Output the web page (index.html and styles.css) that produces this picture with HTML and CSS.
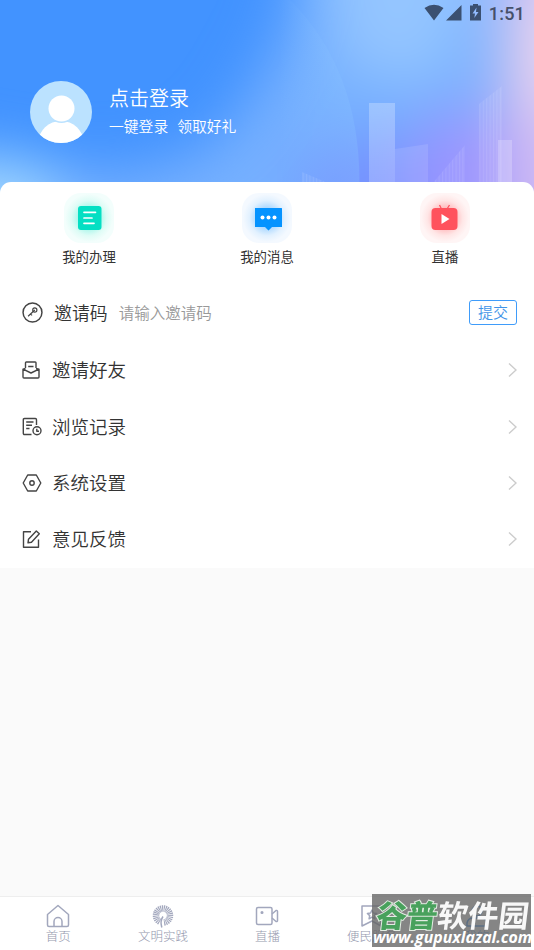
FILE: index.html
```html
<!DOCTYPE html>
<html lang="zh-CN">
<head>
<meta charset="utf-8">
<title>我的</title>
<link rel="stylesheet" href="styles.css">
</head>
<body>
<div class="screen">
  <header class="hero">
    <svg class="scene" viewBox="0 0 534 200" preserveAspectRatio="none" aria-hidden="true">
      <defs>
        <filter id="soft" x="-50%" y="-50%" width="200%" height="200%" color-interpolation-filters="sRGB"><feGaussianBlur stdDeviation="29"/></filter>
        <linearGradient id="arc" x1="0" y1="0" x2="1" y2="0"><stop offset=".55" stop-color="#8ac4ff" stop-opacity="0"/><stop offset="1" stop-color="#8ac4ff" stop-opacity=".3"/></linearGradient>
        <linearGradient id="tower" x1="0" y1="0" x2="0" y2="1"><stop offset="0" stop-color="#fff" stop-opacity=".26"/><stop offset="1" stop-color="#fff" stop-opacity=".2"/></linearGradient>
        <linearGradient id="fade" x1="0" y1="0" x2="0" y2="1"><stop offset="0" stop-color="#fff" stop-opacity=".5"/><stop offset="1" stop-color="#fff"/></linearGradient>
        <pattern id="lines" width="3.4" height="10" patternUnits="userSpaceOnUse"><rect width="1" height="10" fill="#fff" opacity=".14"/><rect x="1" width="2.4" height="10" fill="#fff" opacity=".05"/></pattern>
      </defs>
      <rect width="534" height="200" fill="#4293ff"/>
      <g filter="url(#soft)">
        <path d="M-80 140C10 168 90 182 160 165S245 105 285 30L310-80H700V300H-80Z" fill="#76b0ff"/>
        <ellipse cx="-5" cy="200" rx="70" ry="42" fill="#a4d8ff"/>
        <path d="M310-80L345 70L440 85L500-80Z" fill="#94c5ff"/>
        <ellipse cx="375" cy="195" rx="75" ry="55" fill="#7491ff"/>
        <ellipse cx="460" cy="175" rx="55" ry="65" fill="#9a94ff"/>
        <path d="M508-80L500 70L505 280H660V-80Z" fill="#d0bbf3"/>
        <ellipse cx="556" cy="45" rx="42" ry="80" fill="#ead4ee"/>
      </g>
      <path d="M180 0H290Q365 75 359 200H180Z" fill="url(#arc)"/>
      <path d="M369 103H395V200H369Z" fill="url(#tower)"/>
      <path d="M395 149L428 144V200H395Z" fill="#fff" opacity=".11"/>
      <path d="M302 172L330 184V200H302Z" fill="url(#lines)"/>
      <path d="M432 184L465 145V200H432Z" fill="url(#lines)"/>
      <path d="M479 104L502 86V200H479Z" fill="url(#lines)"/>
      <path d="M498 140H512V200H498Z" fill="#fff" opacity=".22"/>
    </svg>
    <div class="status">
      <svg class="status-icons" viewBox="0 0 60 18" width="60" height="18">
        <path d="M.5 4Q10-2.5 19.500 4L10 16.500Z M37.500 1V16.500H22Z"/>
        <path fill-rule="evenodd" d="M49 0h5v1.500h3v15H46v-15h3z M52.500 3.500L48.500 9.500H51L50.300 14L54.500 8H52Z"/>
      </svg>
      <span class="clock">1:51</span>
    </div>
    <div class="profile">
      <svg class="avatar" viewBox="0 0 62 62" width="62" height="62">
        <defs><clipPath id="face"><circle cx="31" cy="31" r="31"/></clipPath></defs>
        <g clip-path="url(#face)"><path fill="#bbe2ff" d="M0 0H62V62H0Z"/><ellipse cx="31" cy="61" rx="22.500" ry="21" fill="#fff"/><circle cx="31.500" cy="28" r="14" fill="#bbe2ff"/><circle cx="31.500" cy="27.500" r="13" fill="#fff"/></g>
      </svg>
      <div>
        <div class="login">点击登录</div>
        <div class="login-sub"><span>一键登录</span><span>领取好礼</span></div>
      </div>
    </div>
  </header>

  <main class="panel">
    <nav class="shortcuts">
      <a class="shortcut">
        <svg class="tile tile-green" viewBox="0 0 50 50"><rect x="14" y="13" width="23.500" height="24" rx="3" fill="#04dfc3"/><path d="M20 19.300H31.500M20 25H28M20 30.300H30" fill="none" stroke="#fff" stroke-width="1.700" stroke-linecap="round"/></svg>
        <span>我的办理</span>
      </a>
      <a class="shortcut">
        <svg class="tile tile-blue" viewBox="0 0 50 50"><path d="M13 15H39.500Q40 15 40 15.500V34H30L26.500 37.500L23 34H13.500Q13 34 13 33.500Z" fill="#0593ff"/><circle cx="20.500" cy="24.500" r="2" fill="#fff"/><circle cx="26.500" cy="24.500" r="2" fill="#fff"/><circle cx="32.500" cy="24.500" r="2" fill="#fff"/></svg>
        <span>我的消息</span>
      </a>
      <a class="shortcut">
        <svg class="tile tile-red" viewBox="0 0 50 50"><path d="M19.500 12L21.500 16M29.500 12L27 16" stroke="#ff5560" stroke-width="1.300"/><rect x="11.500" y="15" width="26" height="22" rx="4" fill="#ff525d"/><path d="M21.500 21L29.500 26L21.500 31Z" fill="#fff"/></svg>
        <span>直播</span>
      </a>
    </nav>

    <div class="row invite">
      <svg class="icon" viewBox="0 0 20 20"><circle cx="10" cy="10" r="9"/><g class="key"><circle cx="12.200" cy="7.600" r="2"/><path d="M12.200 7.600L5.800 13.600M8 11.400L9.600 12.800"/></g></svg>
      <span class="invite-label">邀请码</span>
      <span class="placeholder">请输入邀请码</span>
      <button class="submit">提交</button>
    </div>
    <div class="row">
      <svg class="icon" viewBox="0 0 20 20"><path d="M3.500 8V2.800Q3.500 2 4.300 2H13.200Q14 2 14 2.800V8M6.200 6.500H11.500M3.500 8.500L1 9.200V17Q1 18 2 18H16Q17 18 17 17V9.200L14 8.500M1 9.200L9 13L17 9.200"/></svg>
      <span>邀请好友</span><svg class="chevron" viewBox="0 0 9 16"><path d="M1 1.500L8 8L1 14.500"/></svg>
    </div>
    <div class="row">
      <svg class="icon" viewBox="0 0 20 20"><path d="M9.500 17.500H2.500Q1.300 17.500 1.300 16.300V2.700Q1.300 1.500 2.500 1.500H13.300Q14.500 1.500 14.500 2.700V8M4.200 5H11.500M4.200 8.300H10M4.200 11.500H7.500"/><circle cx="15" cy="13.800" r="4"/><path d="M14.800 11.800V14.200H17"/></svg>
      <span>浏览记录</span><svg class="chevron" viewBox="0 0 9 16"><path d="M1 1.500L8 8L1 14.500"/></svg>
    </div>
    <div class="row">
      <svg class="icon" viewBox="0 0 20 20"><path d="M5.700 2H14.300L18.800 10L14.300 18H5.700L1.200 10Z"/><circle cx="10" cy="10" r="2.200"/></svg>
      <span>系统设置</span><svg class="chevron" viewBox="0 0 9 16"><path d="M1 1.500L8 8L1 14.500"/></svg>
    </div>
    <div class="row">
      <svg class="icon" viewBox="0 0 20 20"><path d="M9 2.800H1.500V18.200H16.500V10.500M6 13.800L6.500 10.200L14.300 2L17.300 4.800L9.500 13.200Z"/></svg>
      <span>意见反馈</span><svg class="chevron" viewBox="0 0 9 16"><path d="M1 1.500L8 8L1 14.500"/></svg>
    </div>
  </main>

  <footer class="tabs">
    <a class="tab"><svg viewBox="0 0 24 24"><path d="M1.500 10.500L12 1.500L22.500 10.500V21Q22.500 22.500 21 22.500H3Q1.500 22.500 1.500 21ZM8 22V17.500a4 4 0 0 1 8 0V22"/></svg><span>首页</span></a>
    <a class="tab"><svg viewBox="0 0 24 24"><circle cx="12" cy="11.500" r="7" pathLength="100" transform="rotate(118 12 11.500)" class="fan"/><path d="M12 12.500Q8.800 17 10.800 23.500"/></svg><span>文明实践</span></a>
    <a class="tab"><svg viewBox="0 0 24 24"><rect x="1.500" y="3.500" width="15.500" height="17" rx="1.500"/><path d="M17 10L21 6.500Q22.500 6 22.500 7.500V16.500Q22.500 18 21 17.500L17 14"/><circle cx="7" cy="8.500" r=".8"/></svg><span>直播</span></a>
    <a class="tab"><svg viewBox="0 0 24 24"><path d="M2 22V2H21V22L12 17ZM12 6l1.400 3 3.200.4-2.300 2.200.6 3.200-2.900-1.600-2.900 1.600.6-3.200-2.300-2.200 3.200-.4z"/></svg><span>便民服务</span></a>
    <a class="tab active"><svg viewBox="0 0 24 24"><circle cx="12" cy="7" r="5"/><path d="M2 22V19Q3 14 8 14H16Q21 14 22 19V22Z"/></svg><span>我的</span></a>
  </footer>

  <aside class="watermark">
    <div class="brand"><b>谷普</b>软件园</div>
    <div class="site">www.gupuxlazal.com</div>
  </aside>
</div>
</body>
</html>
```
FILE: styles.css
```css
* { box-sizing: border-box; }
body {
  margin: 0;
  font-family: "Noto Sans CJK SC", sans-serif;
  color: #333;
  background: #fafafa;
}
.screen {
  position: relative;
  height: 950px;
  display: flex;
  flex-direction: column;
  overflow: hidden;
}

.hero { position: relative; height: 182px; flex: none; }
.scene { position: absolute; top: 0; left: 0; width: 100%; height: 200px; }
.status {
  position: relative;
  display: flex;
  justify-content: flex-end;
  gap: 5px;
  height: 28px;
  padding: 4px 9px 0 0;
}
.status-icons { fill: #3b5070; }
.clock {
  font: 500 18px/20px Roboto, sans-serif;
  letter-spacing: .2px;
  color: #46506a;
}
.profile {
  position: relative;
  display: flex;
  gap: 17px;
  padding: 53px 0 0 30px;
}
.login { margin-top: 2px; font-size: 20px; line-height: 30px; font-weight: 350; color: #fff; }
.login-sub {
  display: flex;
  gap: 9px;
  margin-top: 1px;
  font-size: 14.800px;
  line-height: 24px;
  font-weight: 350;
  color: #fff;
}

.panel {
  position: relative;
  height: 386px;
  background: #fff;
  border-radius: 11px 11px 0 0;
}
.shortcuts { display: flex; height: 101px; padding-top: 11px; }
.shortcut {
  flex: 1;
  display: flex;
  flex-direction: column;
  align-items: center;
  font-size: 13.400px;
  line-height: 20px;
}
.shortcut span { margin-top: 3px; }
.tile { width: 50px; height: 50px; border-radius: 17px; }
.tile-green { background: radial-gradient(circle, #9ff5e8 25%, #dffcf6 50%, #f3fefc 68%); }
.tile-blue { background: radial-gradient(circle, #a5d5ff 25%, #e2f1ff 50%, #f4f9ff 68%); }
.tile-red { background: radial-gradient(circle, #ffb5b8 25%, #ffe6e6 50%, #fff5f5 68%); }

.row {
  display: flex;
  align-items: center;
  height: 56.400px;
  padding: 0 17px 0 22px;
  font-size: 18.500px;
  font-weight: 350;
}
.row span { margin-top: -2px; }
.icon {
  width: 20px;
  height: 20px;
  margin-right: 10px;
  fill: none;
  stroke: #444;
  stroke-width: 1.400;
  stroke-linejoin: round;
}
.key { stroke-width: 1.100; }
.invite { height: 59px; font-size: 17.900px; }
.invite .icon { width: 21px; height: 21px; margin-right: 11px; }
.row .placeholder { margin-left: 11px; font-size: 15.500px; color: #999; }
.submit {
  width: 48px;
  height: 25px;
  margin-left: auto;
  padding: 0;
  border: 1.500px solid #3f9cfa;
  border-radius: 3px;
  background: #fff;
  color: #3f94e8;
  font: 350 15px/19px "Noto Sans CJK SC", sans-serif;
  padding-bottom: 3px;
}
.chevron {
  width: 9px;
  height: 16px;
  margin-left: auto;
  fill: none;
  stroke: #ccc;
  stroke-width: 1.400;
}

.tabs {
  display: flex;
  height: 54px;
  margin-top: auto;
  padding: 7px 5px 0 6px;
  border-top: 1px solid #eee;
  background: #fff;
}
.tab {
  flex: 1;
  display: flex;
  flex-direction: column;
  align-items: center;
  font-size: 12.500px;
  line-height: 16px;
  font-weight: 300;
  color: #9498ae;
}
.tab svg {
  width: 24px;
  height: 24px;
  fill: none;
  stroke: #a2a7bd;
  stroke-width: 1.500;
  stroke-linejoin: round;
}
.tab .fan {
  stroke-width: 6.500;
  stroke-dasharray: 2.300 1.350 2.300 1.350 2.300 1.350 2.300 1.350 2.300 1.350 2.300 1.350 2.300 1.350 2.300 1.350 2.300 1.350 2.300 1.350 2.300 1.350 2.300 1.350 2.300 1.350 2.300 1.350 2.300 1.350 2.300 1.350 2.300 1.350 2.300 1.350 2.300 1.350 2.300 1.350 2.300 1.350 2.300 1.350 2.300 1.350 2.300 1.350 2.300 10;
}
.tab.active { color: #3f94f5; }
.tab.active svg { stroke: #3f94f5; }

.watermark {
  position: absolute;
  left: 372px;
  top: 894px;
  width: 159px;
  height: 53px;
  background: rgba(100, 100, 100, .79);
  color: #fff;
  white-space: nowrap;
}
.brand {
  width: 159px;
  padding-left: 5px;
  font-size: 30.500px;
  line-height: 41px;
  height: 36px;
  font-weight: 700;
  opacity: .95;
  transform: skewX(-7deg);
}
.brand b {
  color: #45a35a;
  -webkit-text-stroke: 2px #e8f2e8;
  paint-order: stroke fill;
}
.site {
  padding-left: 1px;
  font: italic 700 15.900px/15px "Open Sans", sans-serif;
}
```
